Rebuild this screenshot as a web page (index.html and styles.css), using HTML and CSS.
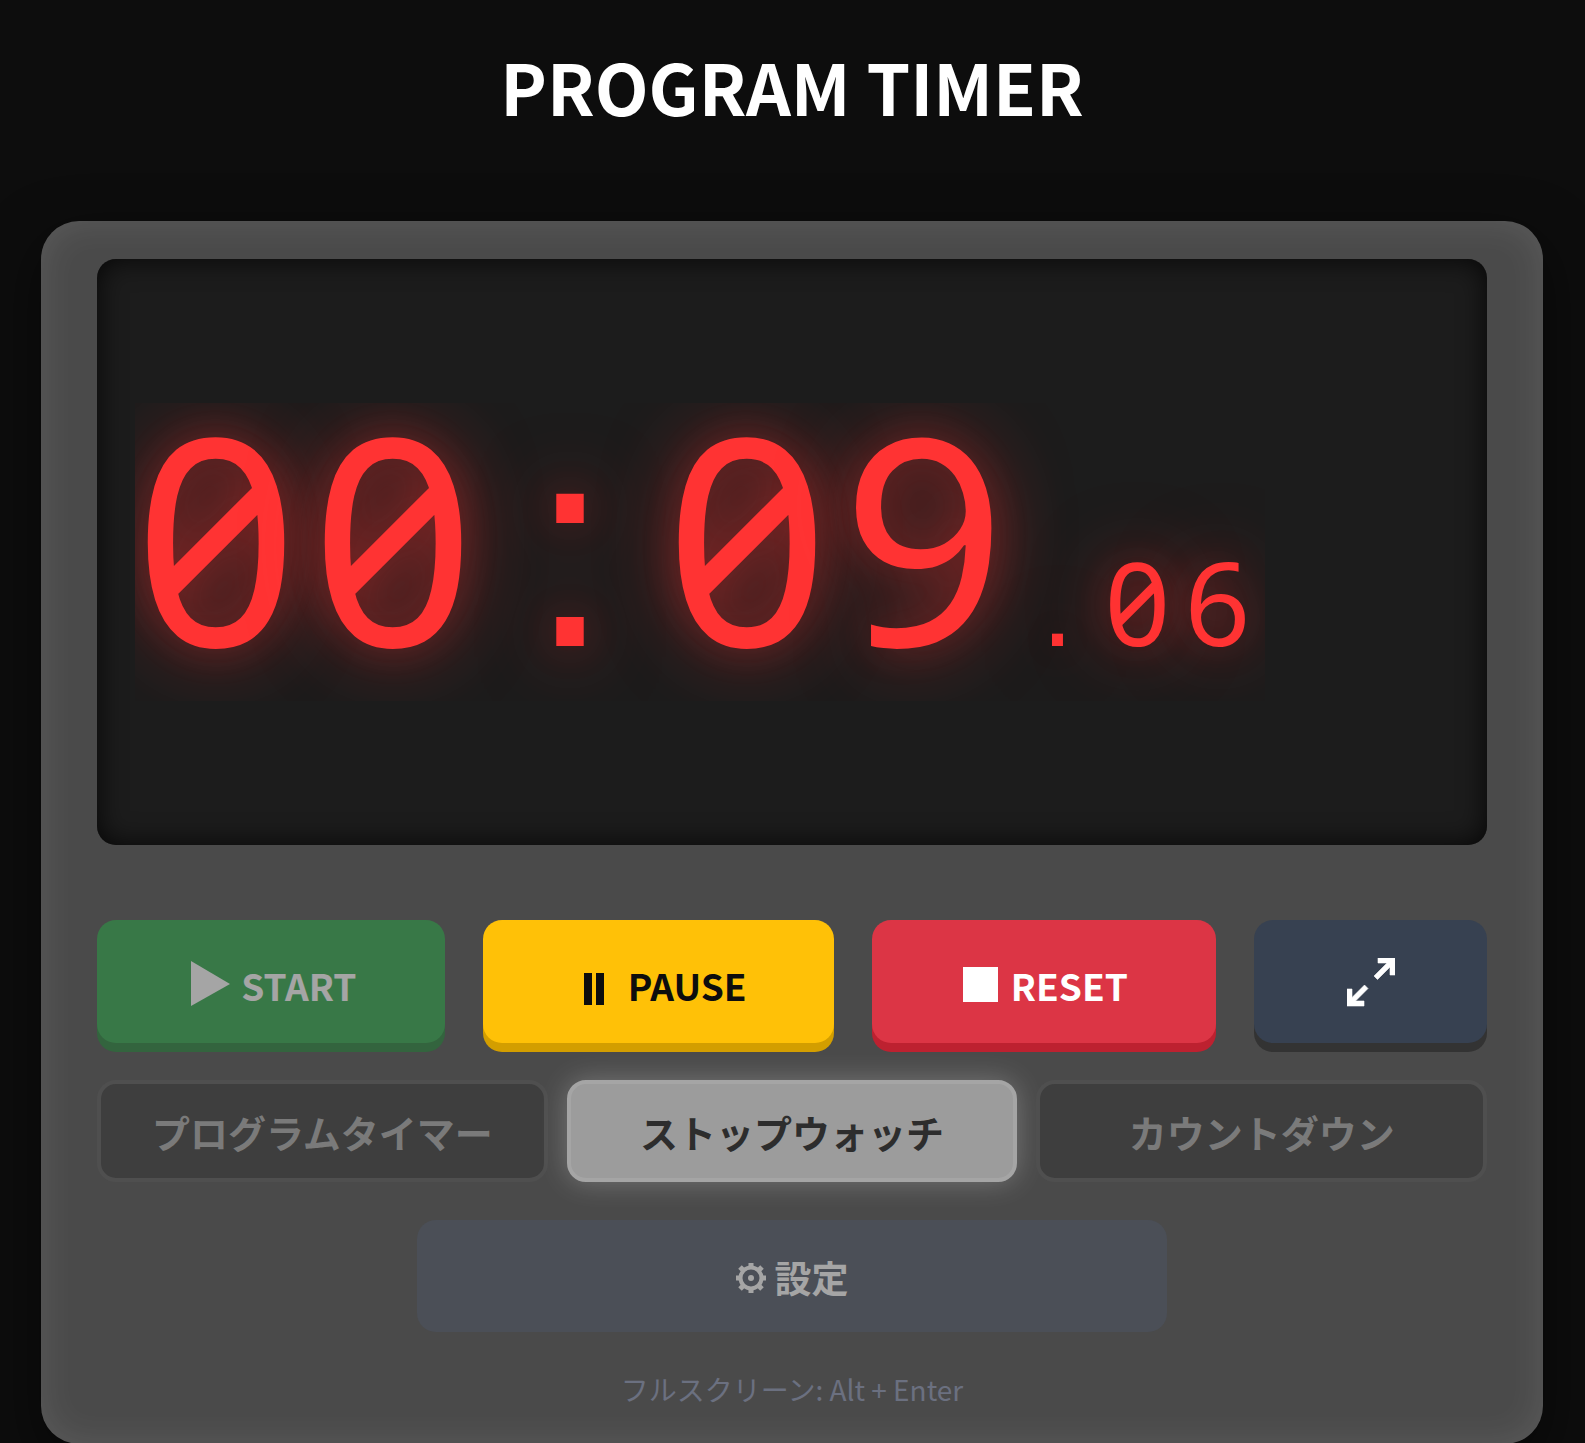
FILE: index.html
```html
<!DOCTYPE html>
<html lang="ja">
<head>
<meta charset="utf-8">
<title>PROGRAM TIMER</title>
<meta name="viewport" content="width=device-width, initial-scale=1">
<link rel="stylesheet" href="styles.css">
</head>
<body>
<h1 class="title">PROGRAM TIMER</h1>
<main class="device">
  <div class="screen">
    <div class="time" role="timer">
      <span class="digit">0</span><span class="digit">0</span><span class="digit separator">:</span><span class="digit">0</span><span class="digit">9</span>
      <span class="fraction"><span class="digit separator">.</span><span class="digit">0</span><span class="digit">6</span></span>
    </div>
  </div>
  <div class="controls">
    <button class="control control-start" type="button" disabled>
      <svg class="icon" width="56" height="48" viewBox="0 0 56 48" aria-hidden="true"><path d="M6 0 45 23 6 45z"/></svg>START
    </button>
    <button class="control control-pause" type="button">
      <svg class="icon" width="57" height="48" viewBox="0 0 57 48" aria-hidden="true"><path d="M13 12h8v32h-8zM25 12h8v32h-8z"/></svg>PAUSE
    </button>
    <button class="control control-reset" type="button">
      <svg class="icon" width="50" height="48" viewBox="0 0 50 48" aria-hidden="true"><path d="M2 6h35v35H2z"/></svg>RESET
    </button>
    <button class="control control-full" type="button" aria-label="フルスクリーン">
      <svg class="icon" width="48" height="54" viewBox="0 0 48 54" aria-hidden="true"><path d="M31 0h17v17h-5V9L30.500 21.500l-3.500-3.500L40 5h-9zM0 31h5v8.500L17.500 27l3.500 3.500L8.500 43H17v5H0z" stroke="currentColor" stroke-width=".6"/></svg>
    </button>
  </div>
  <div class="modes">
    <button class="mode" type="button" disabled>プログラムタイマー</button>
    <button class="mode mode-active" type="button" disabled>ストップウォッチ</button>
    <button class="mode" type="button" disabled>カウントダウン</button>
  </div>
  <button class="settings" type="button" disabled>
    <svg class="icon" width="30" height="32" viewBox="0 -2 30 32" aria-hidden="true"><g fill="none" stroke="currentColor"><circle cx="15" cy="15" r="10.500" stroke-width="4"/><path stroke-width="5" d="M15 0v4M15 26v4M0 15h4M26 15h4M4 4l4 4M22 22l4 4M4 26l4-4M22 8l4-4"/></g><circle cx="15" cy="15" r="3"/></svg>設定
  </button>
  <p class="hint">フルスクリーン: Alt + Enter</p>
</main>
</body>
</html>
```

FILE: styles.css
```css
* {
  box-sizing: border-box;
}

body {
  margin: 0;
  padding: 31px 42px 0 41px;
  background: #0d0d0d;
  color: #fff;
  font-family: "Noto Sans CJK JP", "Noto Sans", sans-serif;
}

button {
  margin: 0;
  border: 0;
  color: inherit;
  font: inherit;
  font-weight: 700;
}

.title {
  margin: 0 0 80px;
  font-size: 70px;
  line-height: 110px;
  font-weight: 700;
  text-align: center;
}

.device {
  padding: 38px 56px 34px;
  border-radius: 38px;
  background: #4a4a4a;
  box-shadow: 0 19px 56px rgba(0, 0, 0, 0.5), inset 0 0 38px rgba(255, 255, 255, 0.1);
}

.screen {
  display: flex;
  align-items: center;
  min-height: 586px;
  padding: 38px;
  border-radius: 19px;
  background: #1c1c1c;
  box-shadow: inset 0 0 28px rgba(0, 0, 0, 0.8);
}

/* The glow stops at the edge of the time's own box. */
.time {
  display: flex;
  align-items: baseline;
  padding-bottom: 36px;
  clip-path: inset(0);
  color: #f33;
  font-family: "Noto Sans", sans-serif;
  font-feature-settings: "zero";
  font-size: 288px;
  line-height: 262px;
  text-shadow: 0 0 38px rgba(255, 51, 51, 0.2), 0 0 75px rgba(255, 51, 51, 0.6);
}

.digit {
  display: flex;
  justify-content: center;
  width: 177px;
  padding-right: 15px;
}

.separator {
  font-family: "Liberation Sans", Arial, sans-serif;
  line-height: 0.8;
}

.fraction {
  display: flex;
  align-items: baseline;
  margin-left: 5px;
  font-size: 115px;
  line-height: 0.8;
}

.fraction .digit {
  width: 80px;
}

.icon {
  flex: none;
  fill: currentColor;
}

.controls {
  display: grid;
  grid-template-columns: 348fr 352fr 344fr 233fr;
  gap: 38px;
  margin-top: 75px;
}

.control {
  display: flex;
  align-items: center;
  justify-content: center;
  height: 123px;
  padding: 6px 0 0;
  border-radius: 19px;
  font-size: 37px;
}

.control-start {
  background: #28a745;
  box-shadow: 0 9px 0 #1e7e34;
  opacity: 0.5;
}

.control-pause {
  background: #ffc107;
  box-shadow: 0 9px 0 #d39e00;
  color: #0d0d0d;
}

.control-reset {
  background: #dc3545;
  box-shadow: 0 9px 0 #bd2130;
}

.control-full {
  background: #374151;
  box-shadow: 0 9px 0 #333;
}

.modes {
  display: grid;
  grid-template-columns: repeat(3, 1fr);
  gap: 19px;
  margin-top: 37px;
}

.mode {
  height: 102px;
  border: 4px solid #4f4f4f;
  border-radius: 19px;
  background: #3e3e3e;
  color: #7a7a7a;
  font-size: 38px;
}

.mode-active {
  border-color: #a5a5a5;
  background: #9c9c9c;
  box-shadow: 0 0 28px rgba(255, 255, 255, 0.25);
  color: #2d2d2d;
}

.settings {
  display: flex;
  align-items: center;
  justify-content: center;
  gap: 9px;
  width: 54%;
  height: 112px;
  margin: 38px auto 0;
  padding: 2px 0 0;
  border-radius: 19px;
  background: #4b4f57;
  color: #a5a5a5;
  font-size: 37px;
}

.hint {
  margin: 37px 0 0;
  color: #6b7080;
  font-size: 28px;
  line-height: 41px;
  text-align: center;
}
```
